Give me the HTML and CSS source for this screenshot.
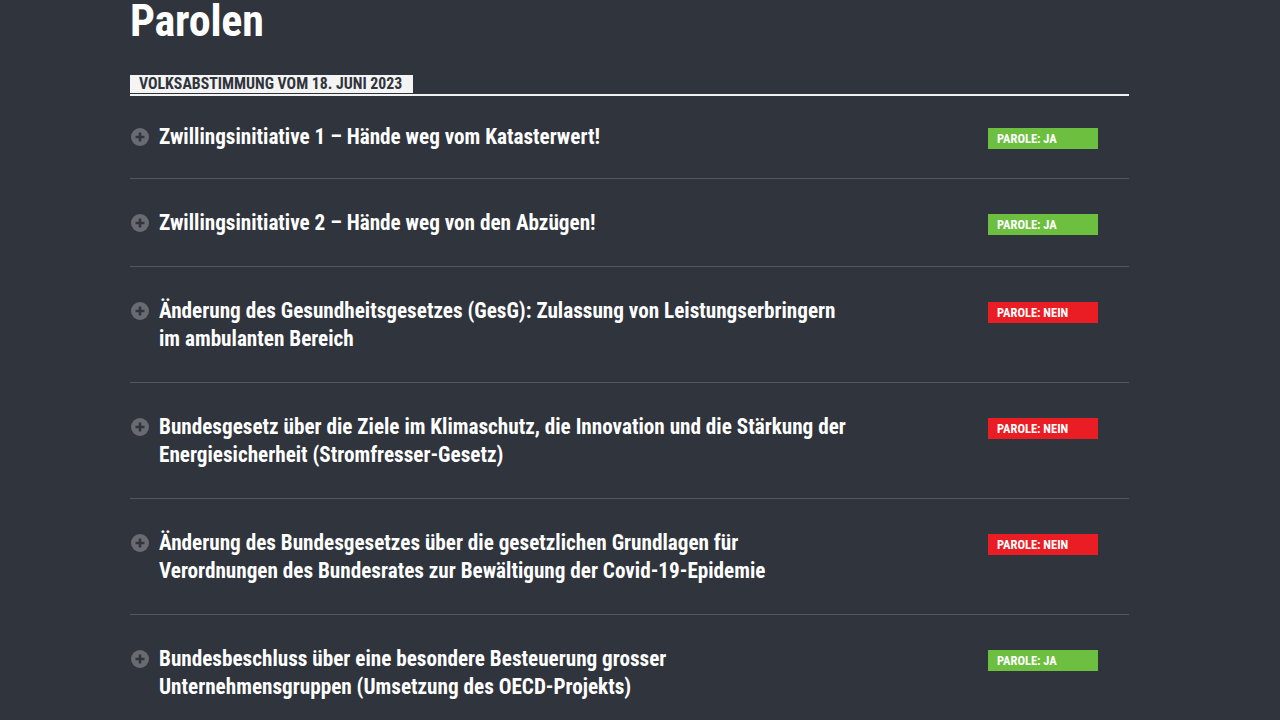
FILE: index.html
```html
<!DOCTYPE html>
<html lang="de">
<head>
<meta charset="utf-8">
<title>Parolen</title>
<link rel="stylesheet" href="styles.css">
</head>
<body>
<main class="page">
  <h1 class="page-title">Parolen</h1>
  <section class="votation">
    <div class="votation-head"><span class="votation-label">Volksabstimmung vom 18. Juni 2023</span></div>
    <ul class="votes">
      <li class="vote">
        <span class="toggle"><svg viewBox="0 0 18 18" width="18" height="18"><circle cx="9" cy="9" r="9" fill="#686b71"/><path d="M9 4.5v9M4.5 9h9" stroke="#30343c" stroke-width="2.6"/></svg></span>
        <span class="vote-title">Zwillingsinitiative 1 – Hände weg vom Katasterwert!</span>
        <span class="badge badge-yes">Parole: Ja</span>
      </li>
      <li class="vote">
        <span class="toggle"><svg viewBox="0 0 18 18" width="18" height="18"><circle cx="9" cy="9" r="9" fill="#686b71"/><path d="M9 4.5v9M4.5 9h9" stroke="#30343c" stroke-width="2.6"/></svg></span>
        <span class="vote-title">Zwillingsinitiative 2 – Hände weg von den Abzügen!</span>
        <span class="badge badge-yes">Parole: Ja</span>
      </li>
      <li class="vote">
        <span class="toggle"><svg viewBox="0 0 18 18" width="18" height="18"><circle cx="9" cy="9" r="9" fill="#686b71"/><path d="M9 4.5v9M4.5 9h9" stroke="#30343c" stroke-width="2.6"/></svg></span>
        <span class="vote-title">Änderung des Gesundheitsgesetzes (GesG): Zulassung von Leistungserbringern<br>im ambulanten Bereich</span>
        <span class="badge badge-no">Parole: Nein</span>
      </li>
      <li class="vote">
        <span class="toggle"><svg viewBox="0 0 18 18" width="18" height="18"><circle cx="9" cy="9" r="9" fill="#686b71"/><path d="M9 4.5v9M4.5 9h9" stroke="#30343c" stroke-width="2.6"/></svg></span>
        <span class="vote-title">Bundesgesetz über die Ziele im Klimaschutz, die Innovation und die Stärkung der<br>Energiesicherheit (Stromfresser-Gesetz)</span>
        <span class="badge badge-no">Parole: Nein</span>
      </li>
      <li class="vote">
        <span class="toggle"><svg viewBox="0 0 18 18" width="18" height="18"><circle cx="9" cy="9" r="9" fill="#686b71"/><path d="M9 4.5v9M4.5 9h9" stroke="#30343c" stroke-width="2.6"/></svg></span>
        <span class="vote-title">Änderung des Bundesgesetzes über die gesetzlichen Grundlagen für<br>Verordnungen des Bundesrates zur Bewältigung der Covid-19-Epidemie</span>
        <span class="badge badge-no">Parole: Nein</span>
      </li>
      <li class="vote">
        <span class="toggle"><svg viewBox="0 0 18 18" width="18" height="18"><circle cx="9" cy="9" r="9" fill="#686b71"/><path d="M9 4.5v9M4.5 9h9" stroke="#30343c" stroke-width="2.6"/></svg></span>
        <span class="vote-title">Bundesbeschluss über eine besondere Besteuerung grosser<br>Unternehmensgruppen (Umsetzung des OECD-Projekts)</span>
        <span class="badge badge-yes">Parole: Ja</span>
      </li>
    </ul>
  </section>
</main>
</body>
</html>
```
FILE: styles.css
```css
html, body {
  margin: 0;
  padding: 0;
  background: #30343c;
}
body {
  font-family: "Roboto", "Liberation Sans", sans-serif;
  font-stretch: 75%;
  color: #ffffff;
}
.page {
  width: 999px;
  margin: 0 0 0 130px;
}
.page-title {
  margin: 0;
  font-size: 44px;
  line-height: 42px;
  font-weight: 700;
  letter-spacing: -0.2px;
}
.votation {
  margin-top: 33px;
}
.votation-head {
  border-bottom: 2px solid #f2f2f2;
  padding-bottom: 1px;
  display: flex;
}
.votation-label {
  background: #f4f4f4;
  color: #30343c;
  font-size: 15.8px;
  line-height: 18px;
  font-weight: 700;
  text-transform: uppercase;
  padding: 0 9px;
  width: 265px;
  white-space: nowrap;
}
.votes {
  list-style: none;
  margin: 0;
  padding: 0;
}
.vote {
  display: flex;
  align-items: flex-start;
  padding: 30px 31px 29px 0;
  border-bottom: 1px solid #54575c;
}
.vote:first-child {
  padding-top: 27px;
  padding-bottom: 27px;
}
.toggle {
  flex: none;
  width: 18px;
  height: 18px;
  margin: 5px 10px 0 1px;
  display: flex;
}
.vote-title {
  flex: none;
  width: 740px;
  font-size: 21.2px;
  line-height: 28px;
  font-weight: 700;
}
.badge {
  flex: none;
  margin-left: auto;
  margin-top: 5px;
  width: 110px;
  height: 21px;
  box-sizing: border-box;
  padding-left: 9px;
  font-size: 12.5px;
  line-height: 21px;
  font-weight: 700;
  text-transform: uppercase;
}
.badge-yes {
  background: #6cbf3f;
}
.badge-no {
  background: #ea1c24;
}
```
